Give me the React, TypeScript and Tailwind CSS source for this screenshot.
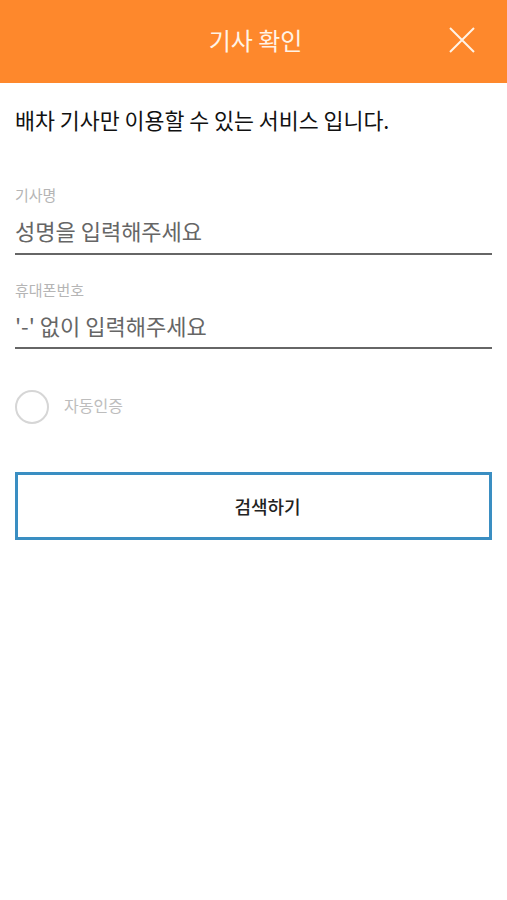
import React from "react";

const font = { fontFamily: '"Noto Sans CJK KR", "Noto Sans", sans-serif' };

export default function App() {
  return (
    <div className="w-[507px] h-[900px] bg-white" style={font}>
      <header className="relative h-[83px] bg-[#fe882c] flex items-center justify-center">
        <h1 className="text-[24px] text-[#fff3e6] font-normal -mt-[4px] pl-[4px]">기사 확인</h1>
        <button className="absolute right-[32px] top-[27px] w-[26px] h-[26px]">
          <svg viewBox="0 0 26 26" width="26" height="26">
            <path d="M1 1 L25 25 M25 1 L1 25" stroke="#fff3e6" strokeWidth="2" fill="none" />
          </svg>
        </button>
      </header>

      <div className="px-[15px]">
        <p className="mt-[23px] text-[21.7px] text-[#111] leading-[28px]">
          배차 기사만 이용할 수 있는 서비스 입니다.
        </p>

        <div className="mt-[51px]">
          <label className="block text-[15px] text-[#b5b5b5] leading-[20px]">기사명</label>
          <input
            placeholder="성명을 입력해주세요"
            className="mt-[2px] w-full h-[48px] text-[22px] text-[#555] placeholder:text-[#666] outline-none border-b-2 border-[#666]"
          />
        </div>

        <div className="mt-[25px]">
          <label className="block text-[15px] text-[#b5b5b5] leading-[20px]">휴대폰번호</label>
          <input
            placeholder="'-' 없이 입력해주세요"
            className="mt-[2px] w-full h-[47px] text-[22px] text-[#555] placeholder:text-[#666] outline-none border-b-2 border-[#666]"
          />
        </div>

        <label className="mt-[41px] flex items-center gap-[15px]">
          <span className="w-[34px] h-[34px] rounded-full border-2 border-[#d6d6d6]" />
          <span className="text-[16px] text-[#bdbdbd] -mt-[4px]">자동인증</span>
        </label>

        <button className="mt-[48px] w-full h-[68px] border-[3px] border-[#3a8ec2] pl-[28px] text-[18px] font-medium text-[#222]">
          검색하기
        </button>
      </div>
    </div>
  );
}
